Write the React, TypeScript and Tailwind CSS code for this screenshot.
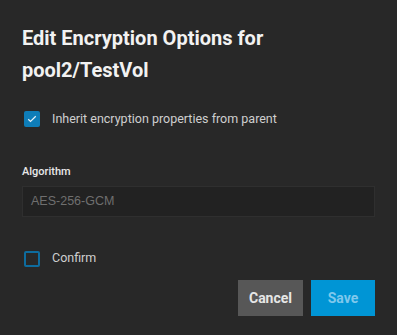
import { useState } from "react";

// Edit encryption dialog — dark theme, static form.

function CheckBox({ checked, onChange }: { checked: boolean; onChange: () => void }) {
  return (
    <button
      onClick={onChange}
      className={`grid h-4 w-4 shrink-0 place-items-center rounded-[2px] ${
        checked ? "bg-[#0e7db8]" : "border-2 border-[#0e6c9e]"
      }`}
    >
      {checked && (
        <svg width="12" height="12" viewBox="0 0 24 24" fill="none">
          <path d="M4.5 12.5l4.5 4.5L19.5 6.5" stroke="#e6f2f9" strokeWidth="2.4" />
        </svg>
      )}
    </button>
  );
}

export default function App() {
  const [inherit, setInherit] = useState(true);
  const [confirm, setConfirm] = useState(false);

  return (
    <div className="h-[335px] w-[397px] bg-[#282828] px-[22px] pt-[22px] font-['Roboto',sans-serif]">
      <h2 className="text-[20px] font-bold leading-[32px] text-[#f2f2f2]">
        Edit Encryption Options for
        <br />
        pool2/TestVol
      </h2>

      <label className="ml-[2px] mt-[24px] flex items-center gap-3">
        <CheckBox checked={inherit} onChange={() => setInherit(!inherit)} />
        <span className="text-[12.5px] text-[#cfcfcf]">Inherit encryption properties from parent</span>
      </label>

      <div className="mt-[35px] text-[11px] font-medium text-[#e8e8e8]">Algorithm</div>
      <div className="mt-[6px] flex h-[31px] items-center border border-[#2f2f2f] bg-[#222222] px-[8px] font-['Liberation_Sans',sans-serif] text-[12.5px] text-[#6f6f6f]">
        AES-256-GCM
      </div>

      <label className="ml-[2px] mt-[32px] flex items-center gap-3">
        <CheckBox checked={confirm} onChange={() => setConfirm(!confirm)} />
        <span className="text-[12.5px] text-[#cfcfcf]">Confirm</span>
      </label>

      <div className="mt-[12px] flex justify-end gap-2">
        <button className="h-9 w-[65px] bg-[#575757] text-[14px] font-bold text-[#e6e6e6]">Cancel</button>
        <button disabled className="h-9 w-16 bg-[#0095d5] text-[14px] font-bold text-[#7fc8ec]">
          Save
        </button>
      </div>
    </div>
  );
}
